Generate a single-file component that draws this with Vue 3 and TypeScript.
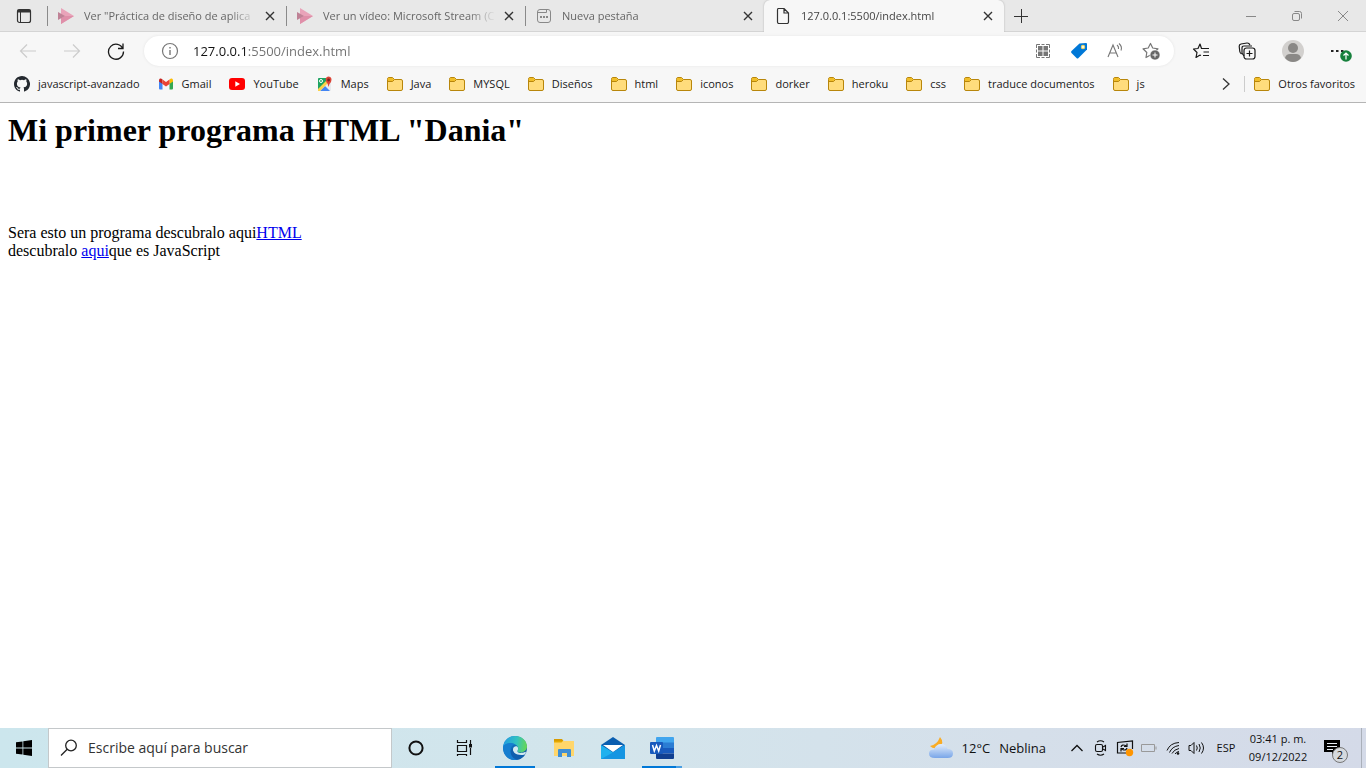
<script setup lang="ts">
import { ref } from 'vue'

interface Tab {
  title: string
  icon: string
}

interface Bookmark {
  label: string
  icon: string
}

const tabs: Tab[] = [
  { title: 'Ver "Práctica de diseño de aplica', icon: 'stream' },
  { title: 'Ver un vídeo: Microsoft Stream (C', icon: 'stream' },
  { title: 'Nueva pestaña', icon: 'newtab' },
  { title: '127.0.0.1:5500/index.html', icon: 'page' },
]
const activeTab = ref(3)

const bookmarks: Bookmark[] = [
  { label: 'javascript-avanzado', icon: 'github' },
  { label: 'Gmail', icon: 'gmail' },
  { label: 'YouTube', icon: 'youtube' },
  { label: 'Maps', icon: 'maps' },
  { label: 'Java', icon: 'folder' },
  { label: 'MYSQL', icon: 'folder' },
  { label: 'Diseños', icon: 'folder' },
  { label: 'html', icon: 'folder' },
  { label: 'iconos', icon: 'folder' },
  { label: 'dorker', icon: 'folder' },
  { label: 'heroku', icon: 'folder' },
  { label: 'css', icon: 'folder' },
  { label: 'traduce documentos', icon: 'folder' },
  { label: 'js', icon: 'folder' },
]

const address = ref('127.0.0.1:5500/index.html')
const query = ref('')
</script>

<template>
  <div class="screen">
    <svg class="sprite" aria-hidden="true">
      <symbol id="folder" viewBox="0 0 16 16">
        <path d="M.5 3.300Q.5 1.500 2 1.500H5.500L7.500 3.500H14Q15.500 3.500 15.500 5V13Q15.500 14.500 14 14.500H2Q.5 14.500.5 13Z" fill="#ffdc7c" stroke="#b8860b" />
        <path d="M1 2H5.500L7 3.500L5.500 5.500H1Z" fill="#f0bd28" />
        <path d="M1 5.500H5.500L7.500 3.500" fill="none" stroke="#b8860b" />
      </symbol>
      <symbol id="github" viewBox="0 0 16 16">
        <path fill="#24292f" d="M8 0C3.580 0 0 3.580 0 8c0 3.540 2.290 6.530 5.470 7.590.4.070.55-.17.55-.38 0-.19-.01-.82-.01-1.490-2.010.37-2.530-.49-2.690-.94-.09-.23-.48-.94-.82-1.130-.28-.15-.68-.52-.01-.53.63-.01 1.080.58 1.230.82.72 1.210 1.870.87 2.330.66.070-.52.28-.87.51-1.070-1.780-.2-3.640-.89-3.640-3.950 0-.87.31-1.590.82-2.150-.08-.2-.36-1.020.08-2.120 0 0 .67-.21 2.200.82a7.600 7.600 0 0 1 4 0c1.530-1.040 2.200-.82 2.200-.82.44 1.100.16 1.920.08 2.120.51.56.82 1.270.82 2.150 0 3.070-1.870 3.750-3.650 3.950.29.25.54.73.54 1.480 0 1.070-.01 1.930-.01 2.200 0 .21.15.46.55.38A8 8 0 0 0 8 0Z" />
      </symbol>
      <symbol id="gmail" viewBox="0 0 16 16">
        <path d="M1 4.500L4.500 7V13.500H2Q1 13.500 1 12.500Z" fill="#4285f4" />
        <path d="M15 4.500L11.500 7V13.500H14Q15 13.500 15 12.500Z" fill="#34a853" />
        <path d="M11.500 3.500L13 2.500Q15 2 15 4.500V5.500L11.500 8Z" fill="#fbbc04" />
        <path d="M1 5.500V4.500Q1 2 3 2.500L4.500 3.500V8Z" fill="#c5221f" />
        <path d="M4.500 3.500L8 6L11.500 3.500V8L8 10.500L4.500 8Z" fill="#ea4335" />
      </symbol>
      <symbol id="youtube" viewBox="0 0 16 16">
        <rect y="2" width="16" height="12" rx="3" fill="#f00" />
        <path d="M6.300 5.300V10.700L11 8Z" fill="#fff" />
      </symbol>
      <symbol id="maps" viewBox="0 0 16 16">
        <rect x="1" y="2" width="13" height="13" rx="1" fill="#e8eaed" />
        <path d="M1 3Q1 2 2 2H10V6L1 15Z" fill="#1ea362" />
        <path d="M3 15L8 10L13 15Z" fill="#4285f4" />
        <path d="M1 13L10 4V8L3 15H1Z" fill="#fbd249" />
        <circle cx="4" cy="5" r="1.500" fill="none" stroke="#fff" />
        <path d="M11.500 11Q11.300 8 9.300 6Q7.500 1 11.500.5Q15.800 1 14 6Q11.800 8 11.500 11Z" fill="#db4437" />
        <circle cx="11.600" cy="4" r="1.400" fill="#7b231e" />
      </symbol>
      <symbol id="stream" viewBox="0 0 16 16">
        <path d="M3 0L16 8L3 16Z" fill="#e9a3b9" />
        <path d="M3 16V10.300L7 8H16Z" fill="#df8fa9" />
        <path d="M0 4L7 8L0 12Z" fill="#bf8296" />
      </symbol>
      <symbol id="newtab" viewBox="0 0 16 16">
        <rect x="1.500" y="1.500" width="13" height="13" rx="2.500" fill="none" stroke="#888" />
        <path d="M1.500 4.500H10.500V1.500" fill="none" stroke="#888" />
        <path d="M4 9H6M7 9H9M10 9H12" fill="none" stroke="#888" stroke-width="2" />
      </symbol>
      <symbol id="page" viewBox="0 0 16 16">
        <path d="M3.500.5H9L13.500 5V14Q13.500 15.500 12 15.500H4Q2.500 15.500 2.500 14V2Q2.500.5 3.500.5ZM9 .5V5H13.500" fill="none" stroke="#333" stroke-width="1.200" />
      </symbol>
      <symbol id="cross" viewBox="0 0 10 10">
        <path d="M1 1L9 9M9 1L1 9" fill="none" stroke="#333" stroke-width="1.400" />
      </symbol>
    </svg>

    <header class="browser">
      <div class="tab-strip">
        <button class="tab-menu" aria-label="Menú de pestañas">
          <svg width="16" height="16" viewBox="0 0 16 16" fill="none" stroke="#333">
            <rect x="1.500" y="1.500" width="13" height="13" rx="2" stroke-width="1.200" />
            <path d="M1.500 3H14.500" stroke-width="3" />
            <path d="M4.500 4V14.500" />
          </svg>
        </button>
        <div v-for="(tab, i) in tabs" :key="i" class="tab" :class="{ active: i === activeTab }">
          <button class="tab-main" @click="activeTab = i">
            <svg class="icon" width="16" height="16"><use :href="'#' + tab.icon" /></svg>
            <span class="tab-title">{{ tab.title }}</span>
          </button>
          <button class="tab-close" aria-label="Cerrar pestaña">
            <svg width="10" height="10"><use href="#cross" /></svg>
          </button>
        </div>
        <button class="new-tab" aria-label="Nueva pestaña">
          <svg width="14" height="14" viewBox="0 0 14 14"><path d="M7.500 0V14M0 7.500H14" stroke="#333" fill="none" /></svg>
        </button>
        <div class="window-controls">
          <button aria-label="Minimizar"><svg width="10" height="10" viewBox="0 0 10 10"><path d="M0 5.500H10" stroke="#888" /></svg></button>
          <button aria-label="Restaurar">
            <svg width="12" height="12" viewBox="0 0 12 12" fill="none" stroke="#888">
              <rect x="1.500" y="3.500" width="7" height="7" rx="1.500" />
              <path d="M3.500 1.500H8.500Q10.500 1.500 10.500 3.500V8.500" />
            </svg>
          </button>
          <button aria-label="Cerrar"><svg width="12" height="12" viewBox="0 0 12 12"><path d="M1 1L11 11M11 1L1 11" stroke="#888" /></svg></button>
        </div>
      </div>

      <div class="toolbar">
        <div class="nav">
          <button aria-label="Atrás"><svg width="18" height="16" viewBox="0 0 18 16" fill="none" stroke="#ccc" stroke-width="1.200"><path d="M17 8H1.500M8 1.500L1.500 8L8 14.500" /></svg></button>
          <button aria-label="Adelante"><svg width="18" height="16" viewBox="0 0 18 16" fill="none" stroke="#ccc" stroke-width="1.200"><path d="M1 8H16.500M10 1.500L16.500 8L10 14.500" /></svg></button>
          <button aria-label="Actualizar">
            <svg width="18" height="18" viewBox="0 0 18 18" fill="none" stroke="#1a1a1a" stroke-width="1.300">
              <path d="M16 7A7.500 7.500 0 1 0 16.500 9.500M16 1.500V6.500H11" />
            </svg>
          </button>
        </div>
        <div class="address">
          <svg width="18" height="18" viewBox="0 0 18 18" fill="none" stroke="#777">
            <circle cx="9" cy="9" r="7.500" stroke-width="1.200" />
            <path d="M9 8V13M9 5V6.500" stroke-width="1.400" />
          </svg>
          <input v-model="address" class="address-input" aria-label="Barra de direcciones" spellcheck="false" />
          <button aria-label="Código QR">
            <svg width="16" height="16" viewBox="0 0 16 16" fill="none" stroke="#777">
              <path d="M1.500 5V1.500H5M6.500 1.500H9.500M11 1.500H14.500V5M14.500 6.500V9.500M14.500 11V14.500H11M9.500 14.500H6.500M5 14.500H1.500V11M1.500 9.500V6.500" />
              <path d="M3 3H7.500V7.500H3ZM8.500 3H13V7.500H8.500ZM3 8.500H7.500V13H3ZM8.500 8.500H13V13H8.500Z" fill="#777" stroke="none" />
            </svg>
          </button>
          <button aria-label="Compras">
            <svg width="18" height="18" viewBox="0 0 18 18">
              <path d="M9.500 1.500L16 1Q17 1 17 2V7.500L8.500 16Q7.500 17 6.500 16L1.500 11Q.5 10 1.500 9Z" fill="#0078d7" />
              <circle cx="13" cy="5" r="1.600" fill="#fff" stroke="#ead46a" stroke-width="1.200" />
            </svg>
          </button>
          <button aria-label="Lectura en voz alta">
            <svg width="18" height="18" viewBox="0 0 18 18" fill="none" stroke="#777" stroke-width="1.100">
              <path d="M2 15L7 3L12 15M4 11H10M11 3Q13 4.500 12.500 7M13 1.500Q16.500 4.500 15 8.500" />
            </svg>
          </button>
          <button aria-label="Agregar a favoritos">
            <svg width="18" height="18" viewBox="0 0 18 18">
              <path d="M8.500 1.500L10.700 6L16 6.800L12 10.500L13 15L8.500 13L4 15.500L4.800 10.500L1 6.800L6.200 6Z" fill="none" stroke="#777" stroke-width="1.200" stroke-linejoin="round" />
              <circle cx="13" cy="13" r="5" fill="#666" stroke="#fff" stroke-width=".6" />
              <path d="M13 10.500V15.500M10.500 13H15.500" stroke="#fff" />
            </svg>
          </button>
        </div>
        <div class="tools">
          <button aria-label="Favoritos">
            <svg width="18" height="18" viewBox="0 0 18 18" fill="none" stroke="#1a1a1a" stroke-width="1.200" stroke-linejoin="round">
              <path d="M11 6.500H9.500L8 2L6 6.500L1.500 7L5 10.500L4 15.500L8 13M8 13L9 13.500M10 6.500H17M11.500 10H17M11 13.500H17" />
            </svg>
          </button>
          <button aria-label="Colecciones">
            <svg width="18" height="18" viewBox="0 0 18 18" fill="none" stroke="#1a1a1a" stroke-width="1.200">
              <rect x="6" y="6" width="11" height="11" rx="2.500" />
              <path d="M11.500 8.500V14.500M8.500 11.500H14.500M3.500 12Q2 11 1.800 9.500L1.200 4.500Q1 2.500 3 2L9 1Q11 .8 12 3M6 14L4 11V6Q4 4 6 4H14" />
            </svg>
          </button>
          <button aria-label="Perfil">
            <svg width="22" height="22" viewBox="0 0 22 22">
              <circle cx="11" cy="11" r="11" fill="#d2d0ce" />
              <circle cx="11" cy="8" r="5" fill="#8a8886" />
              <path d="M3 18Q4 14 8 14H14Q18 14 19 18Q15.500 22 11 22Q6.500 22 3 18Z" fill="#8a8886" />
            </svg>
          </button>
          <button class="settings" aria-label="Configuración y más">
            <svg width="22" height="22" viewBox="0 0 22 22">
              <path d="M1 10H3.500V12H1ZM6 10H8.500V12H6ZM11 10H13.500V12H11Z" fill="#222" />
              <circle cx="16" cy="16" r="5.800" fill="#16803c" />
              <path d="M16 19.500V13M13.500 15.500L16 13L18.500 15.500" fill="none" stroke="#fff" stroke-width="1.200" />
            </svg>
          </button>
        </div>
      </div>

      <nav class="bookmarks" aria-label="Barra de favoritos">
        <a v-for="b in bookmarks" :key="b.label" href="#" class="bookmark">
          <svg class="icon" width="16" height="16"><use :href="'#' + b.icon" /></svg>
          <span>{{ b.label }}</span>
        </a>
        <button class="more" aria-label="Más favoritos">
          <svg width="8" height="14" viewBox="0 0 8 14"><path d="M1 1.500L7 7L1 12.500" fill="none" stroke="#333" stroke-width="1.300" /></svg>
        </button>
        <a href="#" class="bookmark others">
          <svg class="icon" width="16" height="16"><use href="#folder" /></svg>
          <span>Otros favoritos</span>
        </a>
      </nav>
    </header>

    <main class="page">
      <h1>Mi primer programa HTML "Dania"</h1>
      <p>Sera esto un programa descubralo aqui<a href="#">HTML</a><br />descubralo <a href="#">aqui</a>que es JavaScript</p>
    </main>

    <footer class="taskbar">
      <button class="start" aria-label="Inicio">
        <svg width="16" height="16" viewBox="0 0 16 16"><path d="M0 2.300L6.500 1.400V7.500H0ZM7.300 1.300L16 0V7.500H7.300ZM0 8.500H6.500V14.600L0 13.700ZM7.300 8.500H16V16L7.300 14.700Z" /></svg>
      </button>
      <label class="search">
        <svg width="18" height="18" viewBox="0 0 18 18" fill="none" stroke="#222" stroke-width="1.300"><circle cx="11" cy="6.500" r="5.300" /><path d="M7.200 10.300L1 16.500" /></svg>
        <input v-model="query" placeholder="Escribe aquí para buscar" aria-label="Escribe aquí para buscar" />
      </label>
      <button class="system" aria-label="Cortana">
        <svg width="16" height="16" viewBox="0 0 16 16"><circle cx="8" cy="8" r="6.600" fill="none" stroke="#111" stroke-width="2" /></svg>
      </button>
      <button class="system" aria-label="Vista de tareas">
        <svg width="17" height="16" viewBox="0 0 17 16" fill="none" stroke="#111" stroke-width="1.200">
          <path d="M1.500 0V2.500H10.500V0M1.500 5.500H10.500V11.500H1.500ZM1.500 16V14.500H10.500V16M14.500 0V4M14.500 8V15" />
          <path d="M13 4H16V7.500H13Z" fill="#111" stroke="none" />
        </svg>
      </button>
      <div class="apps">
        <button class="running" aria-label="Microsoft Edge">
          <svg width="24" height="24" viewBox="0 0 24 24">
            <defs>
              <linearGradient id="edge-top" x1="0" y1=".4" x2="1" y2=".5"><stop stop-color="#219be2" /><stop offset=".55" stop-color="#32c2c1" /><stop offset="1" stop-color="#67d754" /></linearGradient>
              <linearGradient id="edge-low" x1="0" y1="0" x2="1" y2="1"><stop stop-color="#1688d8" /><stop offset="1" stop-color="#0a4b91" /></linearGradient>
            </defs>
            <circle cx="12" cy="12" r="12" fill="url(#edge-low)" />
            <path d="M0 11C1 4 6 0 12 0C19 0 24 5 24 10.500C24 14 21 16.500 17.500 16.500C15.500 16.500 13.800 15.800 14.800 14C16.300 11 13 7.500 8.500 7.500C4.500 7.500 1.500 8.500 0 11Z" fill="url(#edge-top)" />
            <path d="M0 11C2 6.500 9 6 12 8.500C8 9 7 13 8 16.500C9 20.500 12 23 15 23.600C6 26 0 19 0 11Z" fill="#167ed0" />
            <path d="M14.800 14C13 17 18 18 22.500 15.800Q23.500 16.500 22 18.500C18 21 9.500 20 10 13C10.500 10 14 9.500 14.900 11.500Q15.300 12.800 14.800 14Z" fill="#d3eaf1" />
            <path d="M9.500 12C9 17 15 20.500 22 18.500C19 23 15 24.500 12 23C7 20 6.500 14 9.500 12Z" fill="#105fae" />
          </svg>
        </button>
        <button aria-label="Explorador de archivos">
          <svg width="22" height="20" viewBox="0 0 22 20">
            <path d="M1 1H9L10.500 3H1Z" fill="#d89b00" />
            <path d="M1 3H21V18H1Z" fill="#ffd66b" />
            <path d="M1 3H10L8.500 4.500H1Z" fill="#e5a900" />
            <path d="M5 19V12Q5 11 6 11H17Q18 11 18 12V19H14V15H9V19Z" fill="#3f8fd4" />
          </svg>
        </button>
        <button aria-label="Correo">
          <svg width="24" height="24" viewBox="0 0 24 24">
            <path d="M0 9L12 1L24 9V23H0Z" fill="#0a5eb0" />
            <path d="M0 9L12 16.500L24 9V23H0Z" fill="#1fb1ee" />
            <path d="M0 23L12 16.500L24 9V23Z" fill="#1595e2" />
            <path d="M2 9H22L12 16Z" fill="#fff" />
          </svg>
        </button>
        <button class="running stacked" aria-label="Word">
          <svg width="24" height="22" viewBox="0 0 24 22">
            <path d="M7 0H23Q24 0 24 1V6H6V1Q6 0 7 0Z" fill="#41a5ee" />
            <path d="M6 5.500H24V11H6Z" fill="#2b7cd3" />
            <path d="M6 11H24V16.500H6Z" fill="#185abd" />
            <path d="M6 16.500H24V21Q24 22 23 22H7Q6 22 6 21Z" fill="#103f91" />
            <rect y="5" width="13" height="12" rx="1" fill="#185abd" />
            <path d="M2.500 8L4.300 14L6.500 8.500L8.700 14L10.500 8" fill="none" stroke="#fff" stroke-width="1.500" />
          </svg>
        </button>
      </div>

      <button class="weather">
        <svg width="24" height="24" viewBox="0 0 24 24">
          <defs><linearGradient id="cloud" x1="0" y1="0" x2="0" y2="1"><stop stop-color="#e3eefc" /><stop offset="1" stop-color="#78a5e8" /></linearGradient></defs>
          <path d="M11 1Q16 7 10 11Q5 14 1 10Q8 9 11 1Z" fill="#f9ac25" />
          <path d="M6 22Q0 22 0 17.500Q0 13.500 5 13.500Q7 8 12 8Q17 8 18.500 13Q24 13 24 17.500Q24 22 18.500 22Z" fill="url(#cloud)" />
        </svg>
        <span>12°C</span>
        <span>Neblina</span>
      </button>
      <div class="tray">
        <button aria-label="Mostrar iconos ocultos"><svg width="14" height="10" viewBox="0 0 14 10"><path d="M1.500 8L7 2.500L12.500 8" fill="none" stroke="#111" stroke-width="1.300" /></svg></button>
        <button aria-label="Reunirse ahora">
          <svg width="14" height="16" viewBox="0 0 14 16" fill="none" stroke="#111" stroke-width="1.100"><rect x="1.500" y="4.500" width="7" height="7" rx="1.500" /><path d="M9 7L11.500 5.500V10.500L9 9M3 2Q6.500-.5 10 2M3 14Q6.500 16.500 10 14" /></svg>
        </button>
        <button aria-label="Actualización disponible">
          <svg width="18" height="18" viewBox="0 0 18 18" fill="none" stroke="#111" stroke-width="1.200"><path d="M10 14H1.500V3.500L16.500 2V10M5 8Q6 5 9.500 6.500L11 7.500M11 4.500V7.500H8M11 9Q10 12 6.500 10.500L5 9.500M5 12.500V9.500H8" /><circle cx="13.500" cy="13.500" r="3.700" fill="#ff9500" stroke="none" /></svg>
        </button>
        <button aria-label="Batería"><svg width="16" height="10" viewBox="0 0 16 10" fill="none" stroke="#999"><path d="M.5 1.500H13.500V8.500H.5ZM15 3.500V6.500" /></svg></button>
        <button aria-label="Red">
          <svg width="14" height="14" viewBox="0 0 14 14" fill="none" stroke="#111"><path d="M1 9.500Q4 2 13 1.500M3.500 11.500Q6 5.500 13 4.500M6 12.500Q8 8.500 13 7.500M9 13Q10 11 13 10.500" /><circle cx="12" cy="12.500" r="1.300" fill="#111" stroke="none" /></svg>
        </button>
        <button aria-label="Volumen">
          <svg width="18" height="14" viewBox="0 0 18 14" fill="none" stroke="#111"><path d="M1 4.500H3L6 1.500V12.500L3 9.500H1ZM8.500 4.500Q10 7 8.500 9.500M11 3Q13.500 7 11 11M13.500 1.500Q17.500 7 13.500 12.500" /></svg>
        </button>
      </div>
      <button class="language">ESP</button>
      <button class="clock"><span>03:41 p. m.</span><span>09/12/2022</span></button>
      <button class="notifications" aria-label="2 notificaciones nuevas">
        <svg width="16" height="16" viewBox="0 0 16 16"><path d="M0 0H16V12H11L8 15V12H0Z" fill="#000" /><path d="M3 3.500H13M3 6.500H13M3 9.500H9" stroke="#e8eef5" /></svg>
        <span class="badge">2</span>
      </button>
      <button class="show-desktop" aria-label="Mostrar escritorio"></button>
    </footer>
  </div>
</template>

<style>
html,
body {
  margin: 0;
  background: #fff;
}
</style>

<style scoped>
* {
  box-sizing: border-box;
}

.screen {
  display: flex;
  flex-direction: column;
  min-height: 100vh;
  font-family: "Open Sans", "Noto Sans", sans-serif;
  font-size: 11px;
  line-height: 16px;
  color: #1a1a1a;
}

.sprite {
  position: absolute;
  width: 0;
  height: 0;
}

button {
  display: flex;
  align-items: center;
  justify-content: center;
  flex: none;
  margin: 0;
  padding: 0;
  border: 0;
  background: none;
  font: inherit;
  color: inherit;
}

svg {
  display: block;
  flex: none;
}

.browser {
  background: #f7f7f7;
  border-bottom: 1px solid #b5b5b5;
}

.tab-strip {
  display: flex;
  height: 32px;
  background: #e8e8e8;
  border-bottom: 1px solid #d4d4d4;
}

.tab-menu {
  width: 47px;
}

.tab {
  display: flex;
  flex: 0 1 239px;
  min-width: 0;
  height: 32px;
  align-items: center;
  padding-right: 7px;
  color: #666;
}

.tab::before {
  content: "";
  width: 1px;
  height: 20px;
  background: #8a8a8a;
}

.tab-main {
  flex: 1;
  min-width: 0;
  height: 32px;
  justify-content: flex-start;
  gap: 10px;
  padding-left: 10px;
}

.tab-title {
  flex: 1;
  min-width: 0;
  overflow: hidden;
  white-space: nowrap;
  text-align: left;
  mask-image: linear-gradient(to right, #000 calc(100% - 28px), transparent);
}

.tab-close {
  width: 18px;
  height: 18px;
  margin-left: 4px;
}

.tab.active {
  flex-basis: 240px;
  background: #f7f7f7;
  color: #444;
  border-radius: 6px 6px 0 0;
  box-shadow: 0 0 2px #aaa;
  clip-path: inset(0 -3px 0 -3px);
}

.tab.active::before {
  background: none;
}

.new-tab {
  width: 34px;
}

.window-controls {
  display: flex;
  margin-left: auto;
}

.window-controls button {
  width: 46px;
}

.toolbar {
  display: flex;
  align-items: center;
  height: 38px;
}

.nav {
  display: flex;
  padding-left: 6px;
}

.nav button {
  width: 44px;
  height: 30px;
}

.address {
  display: flex;
  flex: 1;
  min-width: 0;
  align-items: center;
  height: 30px;
  margin-left: 6px;
  padding: 0 5px 0 17px;
  border-radius: 15px;
  background: #fff;
  box-shadow: 0 0 3px #e4e4e4;
}

.address button {
  width: 36px;
  height: 28px;
}

.address-input {
  flex: 1;
  min-width: 0;
  height: 24px;
  margin-left: 14px;
  padding: 0;
  border: 0;
  outline: 0;
  font: inherit;
  font-size: 13px;
  color: transparent;
  caret-color: #111;
  background: linear-gradient(to right, #111 55px, #707070 55px);
  background-clip: text;
}

.tools {
  display: flex;
  padding-left: 4px;
}

.tools button {
  width: 46px;
  height: 30px;
}

.tools .settings {
  width: 50px;
}

.bookmarks {
  display: flex;
  align-items: center;
  height: 32px;
  padding: 0 11px 4px 14px;
  gap: 18px;
}

.bookmark {
  display: flex;
  flex: none;
  align-items: center;
  gap: 8px;
  color: #1a1a1a;
  text-decoration: none;
  white-space: nowrap;
}

.more {
  width: 20px;
  height: 20px;
  margin-left: auto;
  margin-right: -10px;
}

.others {
  padding-left: 9px;
  border-left: 1px solid #ccc;
}

.page {
  flex: 1;
  padding: 9px 8px;
  background: #fff;
  color: #000;
  font-family: "Liberation Serif", serif;
  font-size: 16px;
  line-height: 18px;
}

.page h1 {
  margin: 0 0 75px;
  font-size: 32px;
  line-height: 37px;
}

.page p {
  margin: 0;
}

.page a {
  color: #0000ee;
}

.taskbar {
  display: flex;
  align-items: stretch;
  height: 40px;
  background: linear-gradient(to right, #cce6ed, #d3e5ec 45%, #d5dfea 75%, #d4dae8);
  color: #111;
}

.start {
  width: 48px;
}

.search {
  display: flex;
  flex: 0 1 344px;
  min-width: 0;
  align-items: center;
  gap: 10px;
  padding: 0 11px;
  border: 1px solid #c4c8ca;
  background: #fff;
}

.search input {
  flex: 1;
  min-width: 0;
  padding: 0;
  border: 0;
  outline: 0;
  background: none;
  font: inherit;
  font-size: 14px;
  line-height: 20px;
  color: #333;
}

.search input::placeholder {
  color: #333;
  opacity: 1;
}

.system {
  width: 48px;
}

.apps {
  display: flex;
  gap: 9px;
  margin-left: 7px;
}

.apps button {
  width: 40px;
  border-top: 2px solid transparent;
  border-bottom: 2px solid transparent;
}

.apps .running {
  border-bottom-color: #0078d7;
}

.apps .stacked {
  border-image: linear-gradient(to right, #0078d7 82%, #4a9fe3 82%) 2;
  border-top-width: 0;
  padding-top: 2px;
}

.weather {
  margin-left: auto;
  gap: 9px;
  font-size: 13px;
}

.tray {
  display: flex;
  margin-left: 19px;
}

.tray button {
  width: 24px;
}

.language {
  width: 34px;
}

.clock {
  flex-direction: column;
  width: 70px;
  line-height: 18px;
}

.notifications {
  position: relative;
  width: 44px;
  margin-left: 4px;
}

.notifications svg {
  margin-right: 14px;
}

.badge {
  position: absolute;
  right: 13px;
  bottom: 5px;
  width: 16px;
  height: 16px;
  border: 1px solid #777;
  border-radius: 50%;
  background: #d5d9de;
  line-height: 14px;
  text-align: center;
}

.show-desktop {
  width: 5px;
  border-left: 1px solid #aab0ba;
}
</style>
